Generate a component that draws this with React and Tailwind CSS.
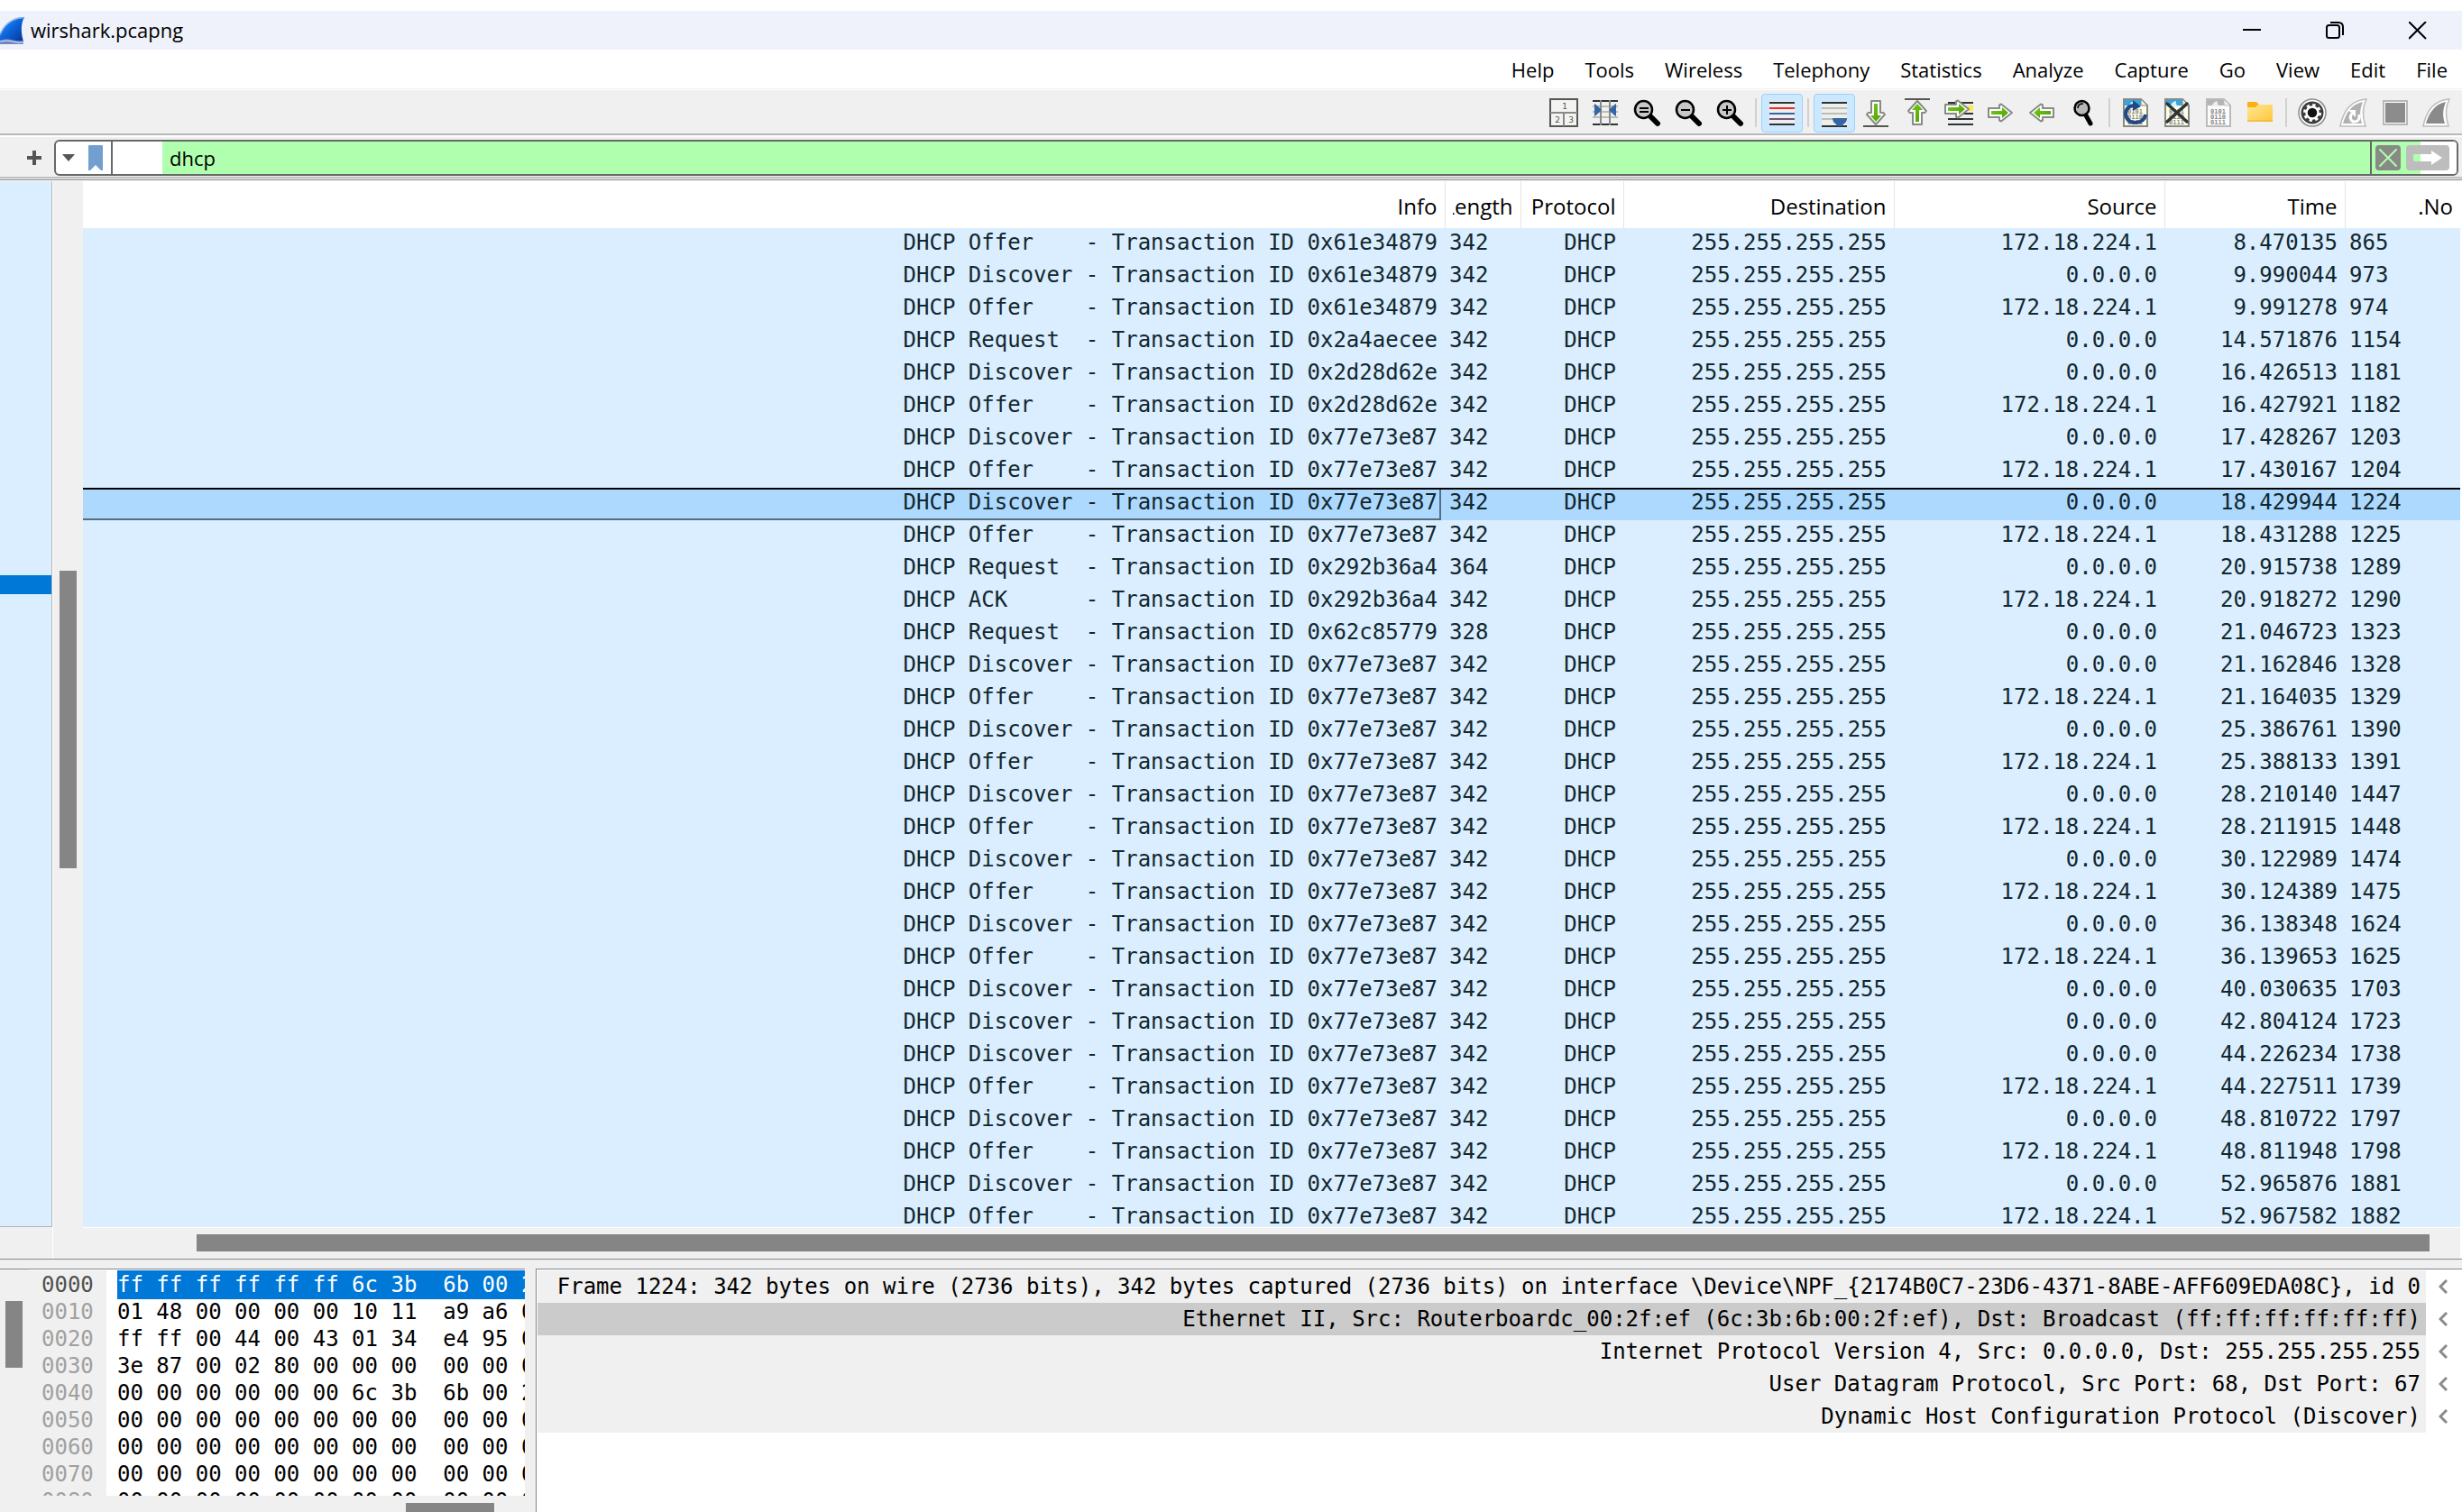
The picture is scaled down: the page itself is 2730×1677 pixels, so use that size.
import React, { useState } from 'react';

const MENU = ['Help', 'Tools', 'Wireless', 'Telephony', 'Statistics', 'Analyze', 'Capture', 'Go', 'View', 'Edit', 'File'];

const SERVER = '172.18.224.1';
const CLIENT = '0.0.0.0';

// [no, time, source, message type, transaction id, length]
const PACKETS = [
  [865, '8.470135', SERVER, 'Offer', '61e34879', 342],
  [973, '9.990044', CLIENT, 'Discover', '61e34879', 342],
  [974, '9.991278', SERVER, 'Offer', '61e34879', 342],
  [1154, '14.571876', CLIENT, 'Request', '2a4aecee', 342],
  [1181, '16.426513', CLIENT, 'Discover', '2d28d62e', 342],
  [1182, '16.427921', SERVER, 'Offer', '2d28d62e', 342],
  [1203, '17.428267', CLIENT, 'Discover', '77e73e87', 342],
  [1204, '17.430167', SERVER, 'Offer', '77e73e87', 342],
  [1224, '18.429944', CLIENT, 'Discover', '77e73e87', 342],
  [1225, '18.431288', SERVER, 'Offer', '77e73e87', 342],
  [1289, '20.915738', CLIENT, 'Request', '292b36a4', 364],
  [1290, '20.918272', SERVER, 'ACK', '292b36a4', 342],
  [1323, '21.046723', CLIENT, 'Request', '62c85779', 328],
  [1328, '21.162846', CLIENT, 'Discover', '77e73e87', 342],
  [1329, '21.164035', SERVER, 'Offer', '77e73e87', 342],
  [1390, '25.386761', CLIENT, 'Discover', '77e73e87', 342],
  [1391, '25.388133', SERVER, 'Offer', '77e73e87', 342],
  [1447, '28.210140', CLIENT, 'Discover', '77e73e87', 342],
  [1448, '28.211915', SERVER, 'Offer', '77e73e87', 342],
  [1474, '30.122989', CLIENT, 'Discover', '77e73e87', 342],
  [1475, '30.124389', SERVER, 'Offer', '77e73e87', 342],
  [1624, '36.138348', CLIENT, 'Discover', '77e73e87', 342],
  [1625, '36.139653', SERVER, 'Offer', '77e73e87', 342],
  [1703, '40.030635', CLIENT, 'Discover', '77e73e87', 342],
  [1723, '42.804124', CLIENT, 'Discover', '77e73e87', 342],
  [1738, '44.226234', CLIENT, 'Discover', '77e73e87', 342],
  [1739, '44.227511', SERVER, 'Offer', '77e73e87', 342],
  [1797, '48.810722', CLIENT, 'Discover', '77e73e87', 342],
  [1798, '48.811948', SERVER, 'Offer', '77e73e87', 342],
  [1881, '52.965876', CLIENT, 'Discover', '77e73e87', 342],
  [1882, '52.967582', SERVER, 'Offer', '77e73e87', 342],
];

const HEX = [
  ['0000', 'ff ff ff ff ff ff 6c 3b  6b 00 2f'],
  ['0010', '01 48 00 00 00 00 10 11  a9 a6 00'],
  ['0020', 'ff ff 00 44 00 43 01 34  e4 95 01'],
  ['0030', '3e 87 00 02 80 00 00 00  00 00 00'],
  ['0040', '00 00 00 00 00 00 6c 3b  6b 00 2f'],
  ['0050', '00 00 00 00 00 00 00 00  00 00 00'],
  ['0060', '00 00 00 00 00 00 00 00  00 00 00'],
  ['0070', '00 00 00 00 00 00 00 00  00 00 00'],
  ['0080', '00 00 00 00 00 00 00 00  00 00 00'],
];

const DETAILS = [
  'Frame 1224: 342 bytes on wire (2736 bits), 342 bytes captured (2736 bits) on interface \\Device\\NPF_{2174B0C7-23D6-4371-8ABE-AFF609EDA08C}, id 0',
  'Ethernet II, Src: Routerboardc_00:2f:ef (6c:3b:6b:00:2f:ef), Dst: Broadcast (ff:ff:ff:ff:ff:ff)',
  'Internet Protocol Version 4, Src: 0.0.0.0, Dst: 255.255.255.255',
  'User Datagram Protocol, Src Port: 68, Dst Port: 67',
  'Dynamic Host Configuration Protocol (Discover)',
];

function Icon({ children }) {
  return (
    <svg viewBox="0 0 32 32" className="w-8 h-8" aria-hidden>
      {children}
    </svg>
  );
}

function LayoutIcon() {
  return (
    <Icon>
      <path d="M1 1h30v30H1z" fill="#f3f3f1" stroke="#555753" strokeWidth="2" />
      <path d="M1 16h30M16 16v15" stroke="#888a85" strokeWidth="2" />
      <g fontSize="9" fill="#555753" textAnchor="middle" fontFamily="DejaVu Sans">
        <text x="17" y="12">1</text>
        <text x="9" y="27">2</text>
        <text x="24" y="27">3</text>
      </g>
    </Icon>
  );
}

function ResizeIcon() {
  return (
    <Icon>
      <path d="M2 3h28M2 29h28" stroke="#2e3436" strokeWidth="2" />
      <path d="M2 9h28M2 15h28M2 21h28" stroke="#babdb6" strokeWidth="2" />
      <path d="M11 2v28M21 2v28" stroke="#888a85" strokeWidth="2" />
      <path d="M4 6q1 0 8 7q-7 7-8 7zM28 6q-1 0-8 7q7 7 8 7z" fill="#3465a4" />
    </Icon>
  );
}

function ZoomIcon({ sign }) {
  return (
    <Icon>
      <path d="M20 20l8 8" stroke="#000" strokeWidth="6" strokeLinecap="round" />
      <circle cx="12.5" cy="12.5" r="9.5" fill="#c8c8c6" stroke="#000" strokeWidth="2.5" />
      <path d={sign} stroke="#000" strokeWidth="2" />
    </Icon>
  );
}

function ColorizeIcon() {
  return (
    <Icon>
      <path d="M2 3h28v26H2z" fill="#eeeeec" />
      <path d="M2 5h28M2 29h28" stroke="#2e3436" strokeWidth="2" />
      <path d="M2 11h28" stroke="#ef2929" strokeWidth="2" />
      <path d="M2 17h28" stroke="#3465a4" strokeWidth="2" />
      <path d="M2 23h28" stroke="#75507b" strokeWidth="2" />
    </Icon>
  );
}

function AutoScrollIcon() {
  return (
    <Icon>
      <path d="M2 4h28v27H2z" fill="#eeeeec" />
      <path d="M2 5h28M2 31h28" stroke="#2e3436" strokeWidth="2" />
      <path d="M2 11h28M2 17h28M2 23h28" stroke="#babdb6" strokeWidth="2" />
      <path d="M14 22h16q0 4-3 6l-3 3h-4l-3-3q-3-2-3-6z" fill="#3465a4" />
    </Icon>
  );
}

function GreenGradient() {
  return (
    <defs>
      <linearGradient id="green" x1="0" y1="0" x2="1" y2="1">
        <stop offset="0" stopColor="#73d216" />
        <stop offset="1" stopColor="#4e9a06" />
      </linearGradient>
    </defs>
  );
}

function LastIcon() {
  return (
    <Icon>
      <GreenGradient />
      <path d="M2 31h28" stroke="#555753" strokeWidth="2" />
      <path d="M11 3h10v13h3.500l1.500 2l-10 11l-10-11l1.500-2H11z" fill="#fff" stroke="#888a85" strokeWidth="2" strokeLinejoin="round" />
      <path d="M14 6h4v13h4l-6 7l-6-7h4z" fill="url(#green)" />
    </Icon>
  );
}

function FirstIcon() {
  return (
    <Icon>
      <path d="M2 1h28" stroke="#555753" strokeWidth="2" />
      <path d="M11 29h10V16h3.500l1.500-2L16 3L6 14l1.500 2H11z" fill="#fff" stroke="#888a85" strokeWidth="2" strokeLinejoin="round" />
      <path d="M14 26h4V13h4l-6-7l-6 7h4z" fill="url(#green)" />
    </Icon>
  );
}

function GoToIcon() {
  return (
    <Icon>
      <path d="M4 4h28v26H4z" fill="#eeeeec" />
      <path d="M26 8h6v6h-6z" fill="#fce94f" />
      <path d="M4 5h28M4 17h28M4 23h28M4 29h28" stroke="#2e3436" strokeWidth="2" />
      <path d="M1 7h12V3.500l2-1L27 12L15 21.500l-2-1V17H1z" fill="#fff" stroke="#888a85" strokeWidth="2" strokeLinejoin="round" />
      <path d="M4 10h12V6l7 6l-7 6v-4H4z" fill="url(#green)" />
    </Icon>
  );
}

function ForwardIcon() {
  return (
    <Icon>
      <path d="M3 11h12V7.500l2-1L29 16l-12 9.500l-2-1V21H3z" fill="#fff" stroke="#888a85" strokeWidth="2" strokeLinejoin="round" />
      <path d="M6 14h12v-4l7 6l-7 6v-4H6z" fill="url(#green)" />
    </Icon>
  );
}

function BackIcon() {
  return (
    <Icon>
      <path d="M29 11H17V7.500l-2-1L3 16l12 9.500l2-1V21h12z" fill="#fff" stroke="#888a85" strokeWidth="2" strokeLinejoin="round" />
      <path d="M26 14H14v-4l-7 6l7 6v-4h12z" fill="url(#green)" />
    </Icon>
  );
}

function FindIcon() {
  return (
    <Icon>
      <path d="M19 19l5 9" stroke="#000" strokeWidth="5" strokeLinecap="round" />
      <circle cx="14.500" cy="11" r="8" fill="#b8b8b6" stroke="#000" strokeWidth="2.500" />
      <path d="M10 11q0-5 6-5" fill="none" stroke="#000" strokeWidth="1.500" />
    </Icon>
  );
}

function FileBase({ paper, edge, sky, fin }) {
  return (
    <>
      <path d="M3 1h20l6 6v24H3z" fill={paper} />
      <path d="M4 2h18v6H4z" fill={sky} />
      <path d="M8 9q3-6 7-6q-1 3 2 6z" fill={fin} />
      <path d="M3 1h19l7 7v23H3z" fill="none" stroke={edge} strokeWidth="2" />
      <path d="M22 1v7h7z" fill="#eee" stroke={edge} strokeWidth="1" />
      <g fontSize="7" fill="#8a8a86" fontFamily="DejaVu Sans Mono" fontWeight="bold">
        <text x="7" y="17">0101</text>
        <text x="7" y="23">0110</text>
        <text x="7" y="29">0111</text>
      </g>
    </>
  );
}

function ReloadIcon() {
  return (
    <Icon>
      <FileBase paper="#fffee8" edge="#888a85" sky="#35a5e0" fin="#d8f0fa" />
      <path d="M17 8q-11-1-12 9q1 10 11 10q10-1 11-9" fill="none" stroke="#204a87" strokeWidth="4" />
      <path d="M13 2l9 7l-9 5z" fill="#204a87" />
    </Icon>
  );
}

function CloseFileIcon() {
  return (
    <Icon>
      <FileBase paper="#fffee8" edge="#888a85" sky="#35a5e0" fin="#d8f0fa" />
      <path d="M5 6l22 20M27 6L5 26" stroke="#2e3436" strokeWidth="3.500" strokeLinecap="round" />
    </Icon>
  );
}

function SaveIcon() {
  return (
    <Icon>
      <FileBase paper="#fcfcfc" edge="#babab8" sky="#b4b4b4" fin="#eee" />
    </Icon>
  );
}

function FolderIcon() {
  return (
    <Icon>
      <defs>
        <linearGradient id="folder" x1="0" y1="0" x2="1" y2="1">
          <stop offset="0" stopColor="#ffe69a" />
          <stop offset="1" stopColor="#ffc837" />
        </linearGradient>
      </defs>
      <path d="M2 5q0-1 1-1h9l3 3h-1v4H2z" fill="#f9b114" />
      <path d="M2 10h9l3-3h15q1 0 1 1v17q0 1-1 1H3q-1 0-1-1z" fill="url(#folder)" />
      <path d="M2 25h28" stroke="#efac2a" strokeWidth="1" />
    </Icon>
  );
}

function OptionsIcon() {
  return (
    <Icon>
      <circle cx="16" cy="16" r="15" fill="#fff" stroke="#8c8c8c" strokeWidth="1.500" />
      <circle cx="16" cy="16" r="12.500" fill="#3c3c3c" />
      <circle cx="16" cy="16" r="8.500" fill="none" stroke="#fff" strokeWidth="3" strokeDasharray="3.300 3.375" />
      <circle cx="16" cy="16" r="6.500" fill="#111" stroke="#fff" strokeWidth="2.500" />
    </Icon>
  );
}

function RestartIcon() {
  return (
    <Icon>
      <path d="M1 31C4 16 12 2 30 1C26 9 25 19 29 31z" fill="#fff" stroke="#bcbcbc" strokeWidth="1.500" />
      <path d="M4 28C7 17 14 6 26 4C23 11 22 19 25 28z" fill="#b0b0b0" />
      <path d="M14 17q-4 5 1 9q8 1 7-8" fill="none" stroke="#fff" strokeWidth="3" />
      <path d="M10 13h8v8z" fill="#fff" />
    </Icon>
  );
}

function StopIcon() {
  return (
    <Icon>
      <path d="M3 3h26v26H3z" fill="#fff" stroke="#b8b8b8" strokeWidth="2" />
      <path d="M5 5h22v22H5z" fill="#8c8c8c" />
    </Icon>
  );
}

function StartIcon() {
  return (
    <Icon>
      <path d="M1 31C4 16 12 2 30 1C26 9 25 19 29 31z" fill="#fff" stroke="#bcbcbc" strokeWidth="1.500" />
      <path d="M4 28C7 17 14 6 26 4C23 11 22 19 25 28z" fill="#8a8a8a" />
    </Icon>
  );
}

const TOOLS = [
  { label: 'Reset layout', icon: <LayoutIcon /> },
  { label: 'Resize columns', icon: <ResizeIcon /> },
  { label: 'Normal size', icon: <ZoomIcon sign="M8 11h10M8 15h10" /> },
  { label: 'Zoom out', icon: <ZoomIcon sign="M8 13h10" /> },
  { label: 'Zoom in', icon: <ZoomIcon sign="M8 13h10M13 8v10" /> },
  null,
  { label: 'Colorize', icon: <ColorizeIcon />, on: true },
  null,
  { label: 'Auto scroll', icon: <AutoScrollIcon />, on: true },
  { label: 'Last packet', icon: <LastIcon /> },
  { label: 'First packet', icon: <FirstIcon /> },
  { label: 'Go to packet', icon: <GoToIcon /> },
  { label: 'Next packet', icon: <ForwardIcon /> },
  { label: 'Previous packet', icon: <BackIcon /> },
  { label: 'Find packet', icon: <FindIcon /> },
  null,
  { label: 'Reload', icon: <ReloadIcon /> },
  { label: 'Close file', icon: <CloseFileIcon /> },
  { label: 'Save file', icon: <SaveIcon /> },
  { label: 'Open file', icon: <FolderIcon /> },
  null,
  { label: 'Capture options', icon: <OptionsIcon /> },
  { label: 'Restart capture', icon: <RestartIcon /> },
  { label: 'Stop capture', icon: <StopIcon /> },
  { label: 'Start capture', icon: <StartIcon /> },
];

function TitleBar() {
  return (
    <header className="h-[43px] shrink-0 pr-[3px] bg-[#eff2fa] flex items-center justify-between">
      <div className="flex items-center gap-[6px]">
        <svg viewBox="0 0 28 32" className="w-7 h-8" aria-hidden>
          <defs>
            <linearGradient id="fin" x1="0" y1="0" x2="1" y2="1">
              <stop offset="0" stopColor="#2f9bff" />
              <stop offset="0.5" stopColor="#0a62d8" />
              <stop offset="1" stopColor="#06308c" />
            </linearGradient>
          </defs>
          <path d="M0 21C5 9 14 1 27 1C23 8 23 18 26 28L0 29z" fill="url(#fin)" />
          <path d="M0 20C5 9 14 2 26 1.500" fill="none" stroke="#8fb8ea" strokeWidth="1.500" />
          <path d="M0 27q6-3 13-1t13 1v4H0z" fill="#6f86c4" />
          <path d="M0 28q8-2 14 0t12 1" fill="none" stroke="#dfe6f5" strokeWidth="1" />
        </svg>
        <h1>wirshark.pcapng</h1>
      </div>
      <div className="flex items-center">
        <button type="button" aria-label="Minimize" className="w-[92px] h-[38px] flex items-center justify-center">
          <svg viewBox="0 0 20 20" className="w-5 h-5" aria-hidden>
            <path d="M0 9h20" stroke="#000" strokeWidth="2" />
          </svg>
        </button>
        <button type="button" aria-label="Restore" className="w-[92px] h-[38px] flex items-center justify-center">
          <svg viewBox="0 0 20 20" className="w-5 h-5" fill="none" stroke="#000" strokeWidth="2" aria-hidden>
            <rect x="1" y="4" width="14" height="14" rx="2.500" />
            <path d="M5 1h9q5 0 5 5v9" />
          </svg>
        </button>
        <button type="button" aria-label="Close" className="w-[92px] h-[38px] flex items-center justify-center">
          <svg viewBox="0 0 20 20" className="w-5 h-5" aria-hidden>
            <path d="M0 0l19 19M19 0L0 19" stroke="#000" strokeWidth="2" />
          </svg>
        </button>
      </div>
    </header>
  );
}

function Toolbar() {
  return (
    <div className="h-[50px] shrink-0 mt-px bg-[#f0f0f0] border-b-2 border-[#b9b9b9] pt-[2px] pr-[5px] flex items-center justify-end">
      {TOOLS.map((tool, i) =>
        tool ? (
          <button
            key={tool.label}
            type="button"
            aria-label={tool.label}
            className={`w-[46px] h-[43px] flex items-center justify-center rounded-sm border ${
              tool.on ? 'bg-[#cce8ff] border-[#99d1ff]' : 'border-transparent'
            }`}
          >
            {tool.icon}
          </button>
        ) : (
          <div key={i} className="w-3 flex justify-center">
            <div className="w-[2px] h-8 bg-[#d0d0d0]" />
          </div>
        )
      )}
    </div>
  );
}

function FilterBar() {
  const [filter, setFilter] = useState('dhcp');

  return (
    <div className="shrink-0 mt-[2px] h-[44px] bg-[#f0f0f0] flex items-center pt-[2px] pr-1">
      <button type="button" aria-label="Add filter button" className="w-[60px] h-full pl-[30px] flex items-center">
        <svg viewBox="0 0 16 16" className="w-4 h-4" aria-hidden>
          <path d="M0 8h16M8 0v16" stroke="#555" strokeWidth="4" />
        </svg>
      </button>
      <div className="flex-1 h-10 flex rounded-md border-2 border-[#666a66] bg-white overflow-hidden">
        <button
          type="button"
          aria-label="Saved filters"
          className="w-[63px] pl-[7px] pr-[9px] flex items-center justify-between border-r-2 border-[#666a66]"
        >
          <svg viewBox="0 0 14 8" className="w-[14px] h-2" aria-hidden>
            <path d="M0 0h14L7 8z" fill="#555" />
          </svg>
          <svg viewBox="0 0 16 28" className="w-4 h-7" aria-hidden>
            <path d="M0 1q0-1 1-1h14q1 0 1 1v27h-2l-6-6l-6 6H0z" fill="#729fcf" />
          </svg>
        </button>
        <label htmlFor="filter" aria-label="Display filter" className="w-[55px]" />
        <input
          id="filter"
          value={filter}
          onChange={(e) => setFilter(e.target.value)}
          className="flex-1 min-w-0 pl-2 bg-[#afffaf] outline-none"
        />
        <div className="w-[96px] pl-1 flex items-center gap-[6px] border-l-2 border-[#666a66] bg-[linear-gradient(to_right,#afffaf_54px,#fff_54px)]">
          <button
            type="button"
            aria-label="Clear filter"
            onClick={() => setFilter('')}
            className="w-7 h-7 rounded-sm bg-[#888a85] flex items-center justify-center"
          >
            <svg viewBox="0 0 28 28" className="w-7 h-7" aria-hidden>
              <path d="M5 5l18 18M23 5L5 23" stroke="#afffaf" strokeWidth="2" strokeLinecap="round" />
            </svg>
          </button>
          <button type="button" aria-label="Apply filter" className="w-12 h-7 rounded-sm bg-[#bdbdbd]">
            <svg viewBox="0 0 48 28" className="w-12 h-7" aria-hidden>
              <path d="M16 10h12V6l12 8l-12 8v-4H16z" fill="#fff" strokeLinejoin="round" />
              <path d="M16 10h-6q-2 0-2 2v4q0 2 2 2h6z" fill="#afffaf" />
            </svg>
          </button>
        </div>
      </div>
    </div>
  );
}

function HeaderCell({ children }) {
  return (
    <th className="p-0 font-normal border-r border-[#e5e5e5] last:border-r-0">
      <div className="h-[52px] mx-2 pt-1 flex items-center justify-end overflow-hidden">{children}</div>
    </th>
  );
}

function PacketRow({ packet, selected, onSelect }) {
  const [no, time, source, type, id, length] = packet;
  const cell = `p-0 ${selected ? 'shadow-[inset_0_2px_0_#000]' : ''}`;

  return (
    <tr onClick={onSelect} className={selected ? 'bg-[#add9ff]' : ''}>
      <td className={cell}>
        <div
          className={`h-9 leading-8 mr-1 pr-1 text-right whitespace-pre ${
            selected ? 'shadow-[inset_0_2px_0_#000,inset_-2px_-2px_0_#576d80]' : ''
          }`}
        >
          {`DHCP ${type.padEnd(8)} - Transaction ID 0x${id}`}
        </div>
      </td>
      <td className={cell}>
        <div className="h-9 leading-8 pl-[5px]">{length}</div>
      </td>
      <td className={cell}>
        <div className="h-9 leading-8 pr-2 text-right">DHCP</div>
      </td>
      <td className={cell}>
        <div className="h-9 leading-8 pr-2 text-right">255.255.255.255</div>
      </td>
      <td className={cell}>
        <div className="h-9 leading-8 pr-2 text-right">{source}</div>
      </td>
      <td className={cell}>
        <div className="h-9 leading-8 pr-2 text-right">{time}</div>
      </td>
      <td className={cell}>
        <div className="h-9 leading-8 pl-[5px]">{no}</div>
      </td>
    </tr>
  );
}

function PacketList() {
  const [selected, setSelected] = useState(1224);

  return (
    <section className="flex-1 min-h-0 flex bg-[#f0f0f0] border-t border-white mr-[2px]">
      {/* intelligent scrollbar */}
      <div className="w-[58px] mb-[35px] bg-[#daeeff] border-r border-b border-[#b4b4b4]">
        <div className="mt-[437px] h-[21px] bg-[#0078d7]" />
      </div>
      <div className="w-[34px] border-l border-white">
        <div className="mt-[432px] ml-[7px] w-[19px] h-[330px] bg-[#858585]" />
      </div>
      <div className="flex-1 min-w-0 flex flex-col">
        <div className="flex-1 min-h-0 overflow-hidden bg-[#daeeff]">
          <table className="w-full table-fixed border-collapse">
            <colgroup>
              <col />
              <col className="w-[84px]" />
              <col className="w-[114px]" />
              <col className="w-[300px]" />
              <col className="w-[300px]" />
              <col className="w-[200px]" />
              <col className="w-[128px]" />
            </colgroup>
            <thead className="bg-white text-[24px]">
              <tr>
                <HeaderCell>Info</HeaderCell>
                <HeaderCell>Length</HeaderCell>
                <HeaderCell>Protocol</HeaderCell>
                <HeaderCell>Destination</HeaderCell>
                <HeaderCell>Source</HeaderCell>
                <HeaderCell>Time</HeaderCell>
                <HeaderCell>.No</HeaderCell>
              </tr>
            </thead>
            <tbody className="font-['DejaVu_Sans_Mono',monospace] text-[24px] text-[#12272e]">
              {PACKETS.map((p) => (
                <PacketRow key={p[0]} packet={p} selected={p[0] === selected} onSelect={() => setSelected(p[0])} />
              ))}
            </tbody>
          </table>
        </div>
        <div className="h-[35px] shrink-0 border-t border-white pt-[7px] pl-[126px] pr-[34px]">
          <div className="h-[19px] bg-[#858585]" />
        </div>
      </div>
    </section>
  );
}

function HexView() {
  return (
    <section className="w-[582px] shrink-0 flex border-t border-[#828790]">
      <div className="w-8 shrink-0">
        <div className="mt-[35px] ml-[6px] w-[19px] h-[74px] bg-[#858585]" />
      </div>
      <div className="flex-1 min-w-0 flex flex-col">
        <div className="flex-1 min-h-0 overflow-hidden flex font-['DejaVu_Sans_Mono',monospace] text-[24px] leading-[30px] border-t border-white">
          <div className="w-[86px] shrink-0 pt-px pl-[14px] text-[#a0a0a0]">
            {HEX.map(([offset], i) => (
              <div key={offset} className={i === 0 ? 'text-[#505050]' : ''}>
                {offset}
              </div>
            ))}
          </div>
          <div className="flex-1 min-w-0 bg-white pl-3 overflow-hidden">
            {HEX.map(([offset, bytes], i) => (
              <div
                key={offset}
                className={`whitespace-pre ${i === 0 ? 'pt-px pb-px -mb-px bg-[#0078d7] text-white' : 'text-black'}`}
              >
                {bytes}
              </div>
            ))}
          </div>
        </div>
        <div className="h-[18px] shrink-0 pt-2 pr-[34px] flex justify-end">
          <div className="w-[98px] bg-[#858585]" />
        </div>
      </div>
    </section>
  );
}

function DetailTree() {
  return (
    <section className="flex-1 min-w-0 bg-white border-t border-l border-[#828790] pt-px pl-px font-['DejaVu_Sans_Mono',monospace] text-[24px] text-black">
      {DETAILS.map((line, i) => (
        <div key={line} className="h-9 flex">
          <div
            className={`flex-1 min-w-0 pr-[6px] leading-9 text-right whitespace-nowrap overflow-hidden ${
              i === 1 ? 'bg-[#cbcbcb]' : 'bg-[#f0f0f0]'
            }`}
          >
            {line}
          </div>
          <button type="button" aria-label="Expand" className="w-10 pl-[14px] flex items-center">
            <svg viewBox="0 0 10 16" className="w-[10px] h-4" aria-hidden>
              <path d="M9 1L2 8l7 7" fill="none" stroke="#8b8b8b" strokeWidth="3" />
            </svg>
          </button>
        </div>
      ))}
    </section>
  );
}

export default function App() {
  return (
    <div className="h-screen pt-3 flex flex-col bg-white overflow-hidden font-['Open_Sans',sans-serif] text-[22px] text-black">
      <TitleBar />
      <nav className="h-[44px] shrink-0 pt-[2px] pr-4 flex items-center justify-end gap-[34px] border-b border-[#f0f0f0]">
        {MENU.map((item) => (
          <button key={item} type="button">
            {item}
          </button>
        ))}
      </nav>
      <Toolbar />
      <FilterBar />
      <div className="h-1 shrink-0 bg-[#f0f0f0] border-t-2 border-t-[#c0c0c0] border-b border-b-[#828790]" />
      <PacketList />
      <div className="h-[11px] shrink-0 bg-[#f0f0f0] border-t border-[#828790]" />
      <div className="h-[270px] shrink-0 flex gap-3 bg-[#f0f0f0]">
        <HexView />
        <DetailTree />
      </div>
    </div>
  );
}
